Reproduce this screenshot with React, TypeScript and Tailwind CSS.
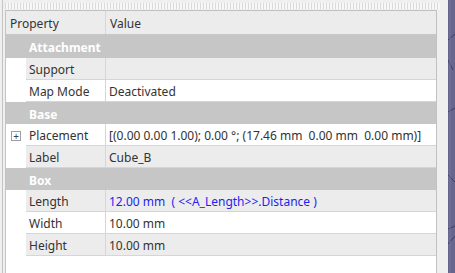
type Row =
  | { kind: "group"; label: string; first?: boolean }
  | { kind: "prop"; label: string; value?: string; blue?: boolean; expand?: boolean; alt: boolean };

const rows: Row[] = [
  { kind: "group", label: "Attachment", first: true },
  { kind: "prop", label: "Support", value: "", alt: true },
  { kind: "prop", label: "Map Mode", value: "Deactivated", alt: false },
  { kind: "group", label: "Base" },
  {
    kind: "prop",
    label: "Placement",
    value: "[(0.00 0.00 1.00); 0.00 °; (17.46 mm\u00a0 0.00 mm\u00a0 0.00 mm)]",
    expand: true,
    alt: false,
  },
  { kind: "prop", label: "Label", value: "Cube_B", alt: true },
  { kind: "group", label: "Box" },
  { kind: "prop", label: "Length", value: "12.00 mm\u00a0 ( <<A_Length>>.Distance )", blue: true, alt: true },
  { kind: "prop", label: "Width", value: "10.00 mm", alt: false },
  { kind: "prop", label: "Height", value: "10.00 mm", alt: true },
];

const PropRow = ({ row }: { row: Row }) => {
  if (row.kind === "group") {
    return (
      <div
        className={`${row.first ? "h-[23px]" : "h-[22px]"} bg-[#c6c6c6] flex items-center pl-[23px] pt-[3px] text-white font-bold`}
      >
        {row.label}
      </div>
    );
  }
  return (
    <div className="h-[22px] flex bg-white">
      <div className="w-[20px] shrink-0 flex items-center justify-center pt-[1px]">
        {row.expand && (
          <div className="w-[10px] h-[10px] border border-[#a0a0a0] bg-white flex items-center justify-center text-[10px] leading-none text-[#404040]">
            +
          </div>
        )}
      </div>
      <div
        className={`flex-1 flex border-b border-[#d6d6d6] ${row.alt ? "bg-[#ececec]" : "bg-white"}`}
      >
        <div className="w-[80px] shrink-0 border-r border-[#d6d6d6] flex items-center pl-[3px] pt-[3px]">
          {row.label}
        </div>
        <div
          className={`flex-1 flex items-center pl-[3px] pt-[3px] whitespace-pre ${row.blue ? "text-[#1e1ef0]" : ""}`}
        >
          {row.value}
        </div>
      </div>
    </div>
  );
};

export default function App() {
  return (
    <div className="w-[455px] h-[273px] overflow-hidden flex bg-[#efefef] text-[12px] text-[#333333] font-['Noto_Sans',sans-serif]">
      <div className="w-[448px] shrink-0 flex">
        <div className="w-[2px] shrink-0" />
        <div className="w-[3px] shrink-0 border-l border-[#c4c4c4]" />
        <div className="flex-1 flex flex-col">
          <div className="h-[3px] shrink-0" />
          <div className="h-[6px] w-[435px] shrink-0 bg-[repeating-linear-gradient(90deg,#d8d8d8_0_1px,#f8f8f8_1px_3px)]" />
          <div className="h-[1px] shrink-0" />
          <div className="w-[432px] flex-1 bg-white border-l border-[#c4c4c4] flex flex-col">
            <div className="w-[431px] border-t border-r border-[#c0c0c0] flex-1 flex flex-col">
              <div className="h-[24px] flex bg-[#ececec] border-b border-[#c8c8c8] shrink-0">
                <div className="w-[100px] border-r border-[#d6d6d6] flex items-center pl-[4px] pt-[3px]">Property</div>
                <div className="flex-1 flex items-center pl-[4px] pt-[3px]">Value</div>
              </div>
              <div className="flex flex-col">
                {rows.map((r, i) => (
                  <PropRow key={i} row={r} />
                ))}
              </div>
              <div className="flex-1 bg-white" />
            </div>
          </div>
        </div>
      </div>
      <div className="flex-1 bg-[#66668e] relative">
        <svg width="7" height="273" className="absolute left-0 top-0">
          <path d="M0 40 L7 34 M0 60 L5 70 M0 112 L7 108 M0 175 L7 182 M0 229 L7 226 M7 236 L0 244" stroke="#3e3e60" strokeWidth="1" fill="none" />
          <path d="M2 0 L2 273" stroke="#77779c" strokeWidth="1" />
        </svg>
      </div>
    </div>
  );
}
